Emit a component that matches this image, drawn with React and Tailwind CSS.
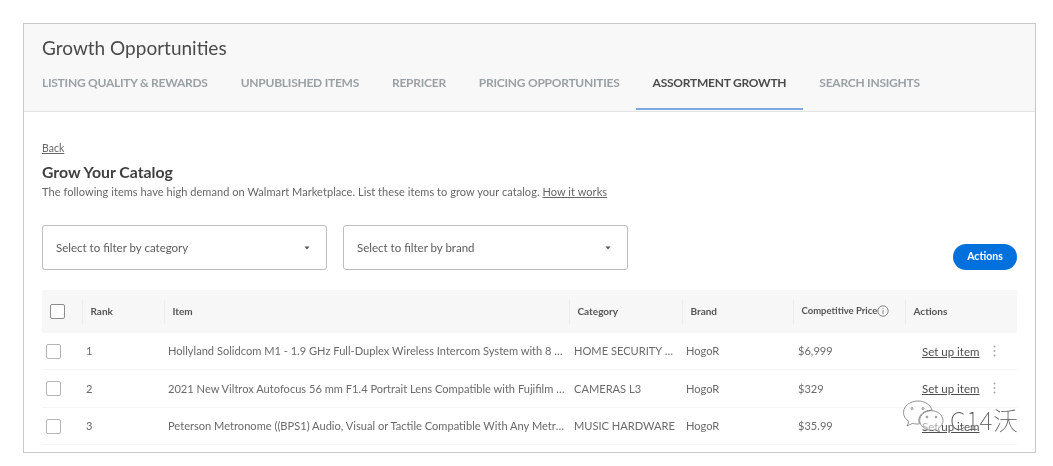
const rows = [
  { rank: "1", item: "Hollyland Solidcom M1 - 1.9 GHz Full-Duplex Wireless Intercom System with 8 Beltpacks", cat: "HOME SECURITY SYSTEMS", price: "$6,999", h: "h-[37px]" },
  { rank: "2", item: "2021 New Viltrox Autofocus 56 mm F1.4 Portrait Lens Compatible with Fujifilm X Mount Cameras", cat: "CAMERAS L3", price: "$329", h: "h-[38px]" },
  { rank: "3", item: "Peterson Metronome ((BPS1) Audio, Visual or Tactile Compatible With Any Metronome App", cat: "MUSIC HARDWARE", price: "$35.99", h: "h-[37px]" },
];

function Tab({ children, active }) {
  return (
    <div className={"flex h-[43px] items-start px-[16.5px] pt-[8px] text-[12px] font-bold leading-[16px] tracking-[-0.25px] whitespace-nowrap " + (active ? "border-b-2 border-[#7ea9dc] text-[#4b4b4b]" : "text-[#9aa1a5]")}>
      {children}
    </div>
  );
}

function Select({ label }) {
  return (
    <div className="flex h-[45px] w-[285px] items-center justify-between rounded-[3px] border border-[#bdbdbd] pl-[13px] pr-[16px] text-[11.5px] text-[#5c5c5c]">
      <span>{label}</span>
      <svg width="6" height="4" viewBox="0 0 6 4"><path d="M0.5 0.5h5L3 3.5z" fill="#555" /></svg>
    </div>
  );
}

function Box({ color = "border-[#b5b5b5]" }) {
  return <div className={"h-[15px] w-[15px] rounded-[2px] border bg-white " + color} />;
}

function Head({ children }) {
  return (
    <div className="flex h-full items-center">
      <div className="flex h-[24px] w-full items-center border-l border-[#ededed] pl-[7.5px] text-[10px] font-bold text-[#555] whitespace-nowrap">
        {children}
      </div>
    </div>
  );
}

const cols = "grid grid-cols-[40px_82px_405px_113px_111px_112px_112px] items-center";

export default function App() {
  return (
    <div className="h-[466px] w-[1053px] overflow-hidden bg-white pl-[23px] pt-[23px] font-['Lato','Noto_Sans',sans-serif] blur-[0.4px]">
      <div className="relative h-[430px] w-[1013px] border border-[#c9c9c9] bg-white">
        <div className="h-[88px] border-b border-[#e3e3e3] bg-[#f8f8f8] pl-[18px]">
          <div className="pt-[11px] text-[19px] leading-[26px] text-[#4a4a4a]">Growth Opportunities</div>
          <div className="-ml-[16.5px] mt-[6px] flex">
            <Tab>LISTING QUALITY &amp; REWARDS</Tab>
            <Tab>UNPUBLISHED ITEMS</Tab>
            <Tab>REPRICER</Tab>
            <Tab>PRICING OPPORTUNITIES</Tab>
            <Tab active>ASSORTMENT GROWTH</Tab>
            <Tab>SEARCH INSIGHTS</Tab>
          </div>
        </div>

        <div className="w-[993px] pl-[18px]">
          <div className="pt-[29px] text-[10.5px] leading-[14px] text-[#666] underline">Back</div>
          <div className="mt-[7px] text-[15.8px] font-bold leading-[20px] text-[#3f3f3f]">Grow Your Catalog</div>
          <div className="mt-[2px] text-[11px] leading-[15px] tracking-[0.06px] text-[#666]">
            The following items have high demand on Walmart Marketplace. List these items to grow your catalog. <span className="underline">How it works</span>
          </div>

          <div className="mt-[26px] flex items-end justify-between">
            <div className="flex gap-4">
              <Select label="Select to filter by category" />
              <Select label="Select to filter by brand" />
            </div>
            <div className="flex h-[26px] w-[64px] items-center justify-center rounded-full bg-[#0071dc] text-[10.5px] font-bold text-white">Actions</div>
          </div>

          <div className="mt-[20px] w-[975px]">
            <div className={cols + " h-[43px] bg-[#f7f7f7]"}>
              <div className="flex pl-[8px]"><Box color="border-[#8c8c8c]" /></div>
              <Head>Rank</Head>
              <Head>Item</Head>
              <Head>Category</Head>
              <Head>Brand</Head>
              <Head>
                <span className="text-[9.5px]">Competitive Price</span>
                <svg className="-mt-[2px]" width="12" height="12" viewBox="0 0 12 12" fill="none" stroke="#555" strokeWidth="0.7">
                  <circle cx="6" cy="6" r="5.2" />
                  <path d="M6 5v3.900M6 3v1" />
                </svg>
              </Head>
              <Head>Actions</Head>
            </div>
            {rows.map((r) => (
              <div key={r.rank} className={cols + " border-b border-[#f5f5f5] pt-[1px] text-[11.1px] text-[#6a6a6a] " + r.h}>
                <div className="-mt-[1px] flex pl-[4px]"><Box /></div>
                <div className="pl-[4px]">{r.rank}</div>
                <div className="truncate pl-[4px]">{r.item}</div>
                <div className="truncate pl-[5px] pr-[6px]">{r.cat}</div>
                <div className="pl-[4px]">HogoR</div>
                <div className="pl-[5px]">{r.price}</div>
                <div className="flex items-center pl-[17px]">
                  <span className="text-[11.5px] text-[#4d4d4d] underline whitespace-nowrap">Set up item</span>
                  {r.rank !== "3" && (
                    <svg className="ml-[13px] -mt-[2px]" width="3" height="12" viewBox="0 0 3 12" fill="#a8a8a8">
                      <circle cx="1.5" cy="1.500" r="1" />
                      <circle cx="1.5" cy="6" r="1" />
                      <circle cx="1.5" cy="10.500" r="1" />
                    </svg>
                  )}
                </div>
              </div>
            ))}
          </div>
        </div>

        <div className="absolute left-[878px] top-[376px] flex items-start">
          <svg width="42" height="36" viewBox="0 0 42 36" fill="#ffffff" fillOpacity="0.55" stroke="#666" strokeWidth="0.7">
            <path d="M16 1C8 1 1.500 6 1.500 12.500c0 3.700 2.100 6.800 5.400 9L5 26l5.400-2.600c1.500.4 3 .6 4.600.6 1 0 1.600 0 2.400-.2-.4-1-.6-2.100-.6-3.200 0-6 5.600-10.400 12.400-10.400h.8C28.600 4.700 22.800 1 16 1z" />
            <path d="M41 20.500c0-5.400-5.300-9.800-11.600-9.800S17.700 15.100 17.700 20.500s5.300 9.800 11.700 9.800c1.300 0 2.600-.2 3.800-.5l4.300 2.300-1.200-3.800c2.700-2 4.700-4.700 4.700-7.800z" />
            <circle cx="10" cy="8.500" r="1" fill="none" />
            <circle cx="21" cy="8.500" r="1" fill="none" />
            <circle cx="25" cy="17" r="0.9" fill="none" />
            <circle cx="34" cy="17" r="0.9" fill="none" />
          </svg>
          <span className="ml-[6px] mt-[3px] font-['Noto_Sans_CJK_SC','Noto_Sans',sans-serif] text-[25px] font-thin leading-[32px] tracking-[0.5px] text-[#555] [text-shadow:0_0_2px_#fff]">C14沃</span>
        </div>
      </div>
    </div>
  );
}
